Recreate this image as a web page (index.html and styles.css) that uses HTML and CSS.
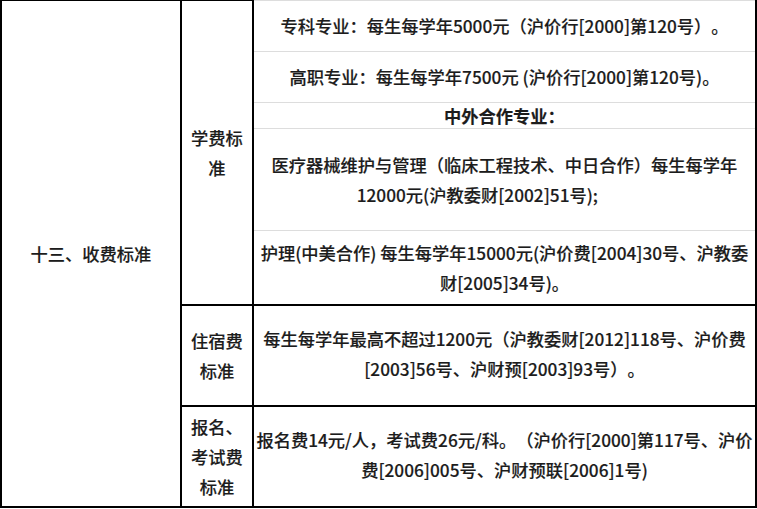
FILE: index.html
```html
<!DOCTYPE html>
<html lang="zh-CN">
<head>
<meta charset="utf-8">
<title>收费标准</title>
<link rel="stylesheet" href="styles.css">
</head>
<body>
<div class="fee">
  <div class="cell title">十三、收费标准</div>
  <div class="cell label first">学费标准</div>
  <div class="cell nested">
    <div class="n-row h-std"><p>专科专业：每生每学年5000元（沪价行[2000]第120号）。</p></div>
    <div class="n-row h-std"><p>高职专业：每生每学年7500元 (沪价行[2000]第120号)。</p></div>
    <div class="n-row h-sub"><p class="strong">中外合作专业：</p></div>
    <div class="n-row h-tall"><p>医疗器械维护与管理（临床工程技术、中日合作）每生每学年12000元(沪教委财[2002]51号);&nbsp;&nbsp;&nbsp;&nbsp;&nbsp;&nbsp;&nbsp;&nbsp;&nbsp;&nbsp;&nbsp;&nbsp;&nbsp;&nbsp;</p></div>
    <div class="n-row h-last"><p>护理(中美合作) 每生每学年15000元(沪价费[2004]30号、沪教委财[2005]34号)。</p></div>
  </div>
  <div class="cell label">住宿费标准</div>
  <div class="cell body"><p>每生每学年最高不超过1200元（沪教委财[2012]118号、沪价费[2003]56号、沪财预[2003]93号）。</p></div>
  <div class="cell label">报名、考试费标准</div>
  <div class="cell body"><p>报名费14元/人，考试费26元/科。（沪价行[2000]第117号、沪价费[2006]005号、沪财预联[2006]1号)</p></div>
</div>
</body>
</html>
```
FILE: styles.css
```css
html, body {
  margin: 0;
  padding: 0;
  background: #fff;
}
body {
  width: 757px;
  height: 509px;
  overflow: hidden;
  font-family: "Noto Sans CJK SC", "Noto Sans", sans-serif;
  font-size: 17.25px;
  font-weight: 500;
  line-height: 30px;
  color: #1c1c1c;
  -webkit-text-stroke: 0.15px #1c1c1c;
  text-spacing-trim: space-all;
}
.fee {
  display: grid;
  grid-template-columns: 178px 70px 501px;
  grid-template-rows: 304px 99px 99px;
  gap: 2px;
  padding: 0 2px 2px 2px;
  background: #000;
  width: 753px;
}
.cell {
  background: #fff;
  display: flex;
  align-items: center;
  justify-content: center;
  text-align: center;
}
.cell p {
  margin: 0;
}
.title {
  grid-row: 1 / 4;
  grid-column: 1;
  border-top: 1px solid #000;
}
.label {
  padding: 0 8px;
}
.label.first {
  border-top: 1px solid #000;
}
.body {
  padding: 0 1px;
  padding-bottom: 4px;
}
.nested {
  flex-direction: column;
  align-items: stretch;
  justify-content: flex-start;
  border-top: 1px solid #ddd;
}
.n-row {
  display: flex;
  align-items: center;
  justify-content: center;
  padding: 0 3px;
  border-bottom: 1px solid #ddd;
}
.n-row:last-child {
  border-bottom: none;
}
.h-std { height: 50px; }
.h-sub { height: 25px; }
.h-tall { height: 101px; }
.h-last { height: 73px; }
.strong {
  font-weight: 700;
}
```
